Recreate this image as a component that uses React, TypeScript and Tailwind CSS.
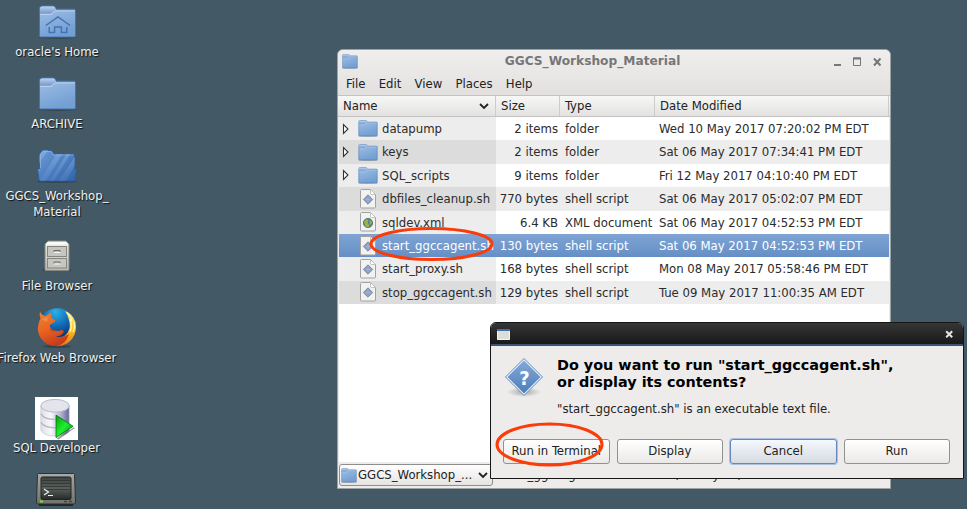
import React from "react";

const font = "font-['DejaVu_Sans_Condensed','DejaVu_Sans',sans-serif] [font-stretch:condensed]";

function FolderArt({ w, h, home }: { w: number; h: number; home?: boolean }) {
  return (
    <svg width={w} height={h} viewBox="0 0 40 34" preserveAspectRatio="none" className="shrink-0">
      <defs>
        <linearGradient id="fold" x1="0" y1="0" x2="0.4" y2="1">
          <stop offset="0" stopColor="#a2c0e6" />
          <stop offset="1" stopColor="#739fd3" />
        </linearGradient>
        <linearGradient id="tab" x1="0" y1="0" x2="0" y2="1">
          <stop offset="0" stopColor="#b9d0ee" />
          <stop offset="1" stopColor="#7399cb" />
        </linearGradient>
      </defs>
      <ellipse cx="20" cy="32.5" rx="19.5" ry="1.5" fill="#000" opacity=".22" />
      <path d="M1.500 7V3.500Q1.500 1 4.500 1h11q2 0 2.500 2l.8 1.200H37q1.500 0 1.500 1.500V31q0 1-1 1H2.500q-1 0-1-1z" fill="url(#fold)" stroke="#4173b3" strokeWidth="1" />
      <path d="M2 7V3.500Q2 1.500 4.500 1.500h11q1.700 0 2.200 1.700L18 5l-3 2-2 1.500H2z" fill="url(#tab)" />
      <path d="M2.500 9.500h11l4-3.500H37.500" fill="none" stroke="#b8cfec" strokeWidth="1" />
      {home && <path d="M8 20.500L20.500 12l12.500 8.500M11.500 22v5.500h5.500V22h7v5.500h5.500V22" fill="none" stroke="#4173b3" strokeWidth="1.500" />}
    </svg>
  );
}

function OpenFolderArt() {
  return (
    <svg width="42" height="34" viewBox="0 0 42 34">
      <defs>
        <linearGradient id="open" x1="0" y1="0" x2="1" y2="1">
          <stop offset="0" stopColor="#6c9bd8" />
          <stop offset="1" stopColor="#2f62a8" />
        </linearGradient>
        <linearGradient id="stripe" x1="0" y1="0" x2="0" y2="1">
          <stop offset="0" stopColor="#a9caf2" stopOpacity=".4" />
          <stop offset="1" stopColor="#8ab2e6" stopOpacity=".12" />
        </linearGradient>
        <clipPath id="openclip"><path d="M3 20V4l3-3h10l3 4h20v15h1.500L39.500 32H3L1.500 20z" /></clipPath>
      </defs>
      <ellipse cx="21" cy="32.5" rx="20" ry="1.300" fill="#000" opacity=".25" />
      <path d="M3.500 20V5L6.500 1.500h8q1.500 0 2.500 2L18 5h19q1.500 0 1.500 1.500V20h2L39 31q0 1-1 1H4.500q-1 0-1.500-1L1.500 20z" fill="url(#open)" stroke="#2d5da1" strokeWidth=".9" />
      <g clipPath="url(#openclip)" fill="url(#stripe)">
        <path d="M8 0h5L0 19v-8zM21 4h6L9 33H3zM31 4h4L17 33h-4zM40 6v9L29 33h-7z" />
      </g>
      <path d="M4.500 19V5.500L7 2.500h7.500q1 0 1.500 1.500l1 2H37.500M2.800 21h1.700" fill="none" stroke="#8fb5e6" strokeWidth=".9" opacity=".8" />
    </svg>
  );
}

function CabinetArt() {
  return (
    <svg width="28" height="34" viewBox="0 0 28 34">
      <defs>
        <linearGradient id="cab" x1="0" y1="0" x2="0" y2="1">
          <stop offset="0" stopColor="#f1f1ed" />
          <stop offset="1" stopColor="#b9bab3" />
        </linearGradient>
      </defs>
      <rect x="0" y="29" width="28" height="2" fill="#000" opacity=".25" />
      <path d="M2 4l3-3h18l3 3v26.500H2z" fill="url(#cab)" stroke="#84857f" />
      <path d="M3 4.500L5.500 2h17L25 4.500z" fill="#fafaf8" />
      <g fill="#c5c6bf" stroke="#84857f">
        <rect x="4.500" y="6.500" width="19" height="10" />
        <rect x="4.500" y="18.500" width="19" height="9.500" />
      </g>
      <path d="M11 12v-1.500h6V12M11 23.500V22h6v1.500" fill="none" stroke="#6a6a66" strokeWidth="1" />
      <path d="M11 12.500h6.500M11 24h6.500" stroke="#f5f5f5" />
    </svg>
  );
}

function FirefoxArt() {
  return (
    <svg width="42" height="42" viewBox="0 0 42 42">
      <defs>
        <radialGradient id="globe" cx=".45" cy=".1" r=".8">
          <stop offset="0" stopColor="#27b2e8" />
          <stop offset=".5" stopColor="#1368b5" />
          <stop offset="1" stopColor="#0c2463" />
        </radialGradient>
        <linearGradient id="fur" x1=".1" y1="0" x2=".5" y2="1">
          <stop offset="0" stopColor="#f08138" />
          <stop offset=".5" stopColor="#ea6420" />
          <stop offset="1" stopColor="#c43a1c" />
        </linearGradient>
        <linearGradient id="flame" x1="0" y1="0" x2="0" y2="1">
          <stop offset="0" stopColor="#ffe97a" />
          <stop offset=".5" stopColor="#fcc822" />
          <stop offset="1" stopColor="#e8701d" />
        </linearGradient>
      </defs>
      <ellipse cx="21" cy="39.500" rx="14" ry="1.500" fill="#000" opacity=".25" />
      <circle cx="21.500" cy="19.500" r="18.300" fill="url(#globe)" />
      <path d="M29 4q8 3 10.500 11Q41.500 25 36 32q-6 7.500-15 7.300L18 32q10 0 14-7 3-5 1-12-1-5-4-9z" fill="url(#flame)" />
      <path d="M31 6q4 3 5 8M34 12q2.500 7 0 13M38 15q1 6-1 10" stroke="#fff6c0" strokeWidth="1.300" fill="none" />
      <path d="M4 4.500Q5 7.500 9 9q3-1 6-3.500Q14.500 8.500 15.500 11q2 1.500 4 2.200-.5 2.300-5 4-1 1.800-.5 2.800 1.500 3 4.500 3.500 3.500 1 7.500-.5Q28.500 24 27 26q-2 3-7 3.500 6 2 13-2.500-3 10-12 12.300Q11 39.500 5.500 32 .5 25 2.300 18 3 14 4.500 11.500 3 8 4 4.500z" fill="url(#fur)" />
      <path d="M5.500 12.500q3-2.500 7-2-2 2-1 4.500" fill="#f9a552" opacity=".55" />
      <path d="M14 20.500q2 3 5.500 3.200-3 1.300-5-.2z" fill="#a83312" opacity=".6" />
    </svg>
  );
}

function DatabaseArt() {
  return (
    <svg width="43" height="43" viewBox="0 0 44 44" className="bg-white">
      <defs>
        <linearGradient id="db" x1="0" y1="0" x2="1" y2="0">
          <stop offset="0" stopColor="#dedee6" />
          <stop offset=".35" stopColor="#f8f8fb" />
          <stop offset=".7" stopColor="#b4b4d0" />
          <stop offset="1" stopColor="#63639c" />
        </linearGradient>
        <linearGradient id="play" x1="0" y1="0" x2="1" y2="1">
          <stop offset="0" stopColor="#0a9a10" />
          <stop offset=".5" stopColor="#1cf22c" />
          <stop offset="1" stopColor="#067a0a" />
        </linearGradient>
      </defs>
      <path d="M6 9v25q3 6 15 6t14-6V9z" fill="url(#db)" stroke="#c9c9d4" strokeWidth=".8" />
      <path d="M6 17q3 6 15 6M6 26q3 5.500 15 5.500" fill="none" stroke="#b5b5c4" strokeWidth="1.300" />
      <ellipse cx="20.500" cy="9" rx="14.500" ry="6.500" fill="#e4e4ed" stroke="#b8b8c6" />
      <path d="M22 42.500l18-11.500.5 1L24 43.500z" fill="#555" opacity=".6" />
      <path d="M21.500 18.500L39 30 21.500 41.500z" fill="url(#play)" stroke="#0a6b12" strokeWidth=".8" />
    </svg>
  );
}

function TerminalArt() {
  return (
    <svg width="40" height="36" viewBox="0 0 40 36">
      <defs>
        <linearGradient id="scr" x1="0" y1="0" x2="0" y2="1">
          <stop offset="0" stopColor="#3c4340" />
          <stop offset=".5" stopColor="#59605c" />
          <stop offset="1" stopColor="#262b29" />
        </linearGradient>
        <linearGradient id="case" x1="0" y1="0" x2="0" y2="1">
          <stop offset="0" stopColor="#aaa" />
          <stop offset="1" stopColor="#70706e" />
        </linearGradient>
      </defs>
      <rect x="3" y="31" width="34" height="3" fill="#222" />
      <path d="M2.500 1.500h35q1 0 1 1L39.500 30q0 2-1.500 2H2Q.5 32 .5 30L1.500 2.500q0-1 1-1z" fill="url(#case)" stroke="#30302f" />
      <rect x="5" y="5" width="30" height="22.500" rx="1.500" fill="url(#scr)" stroke="#202421" />
      <path d="M6 8.500h28M6 11.500h28M6 14.500h28M6 17.500h28" stroke="#2c312f" strokeWidth=".7" />
      <path d="M8 17l4.500 3L8 23M12 23.500h5" fill="none" stroke="#eee" strokeWidth="1.200" />
      <rect x="4" y="28.500" width="3" height="2" fill="#73e42c" />
      <path d="M28 29.500h3M33 29.500h3" stroke="#444" strokeWidth="1.500" />
    </svg>
  );
}

function FileArt({ globe }: { globe?: boolean }) {
  return (
    <svg width="18" height="20" viewBox="0 0 18 20" className="ml-px shrink-0">
      <path d="M1.500 1.500Q1.500.5 2.500.5H11.500L16.500 5.500V18q0 1-1 1h-13q-1 0-1-1z" fill="#f2f2f1" stroke="#a2a3a0" />
      <path d="M11.500.5v4q0 1 1 1h4z" fill="#fff" stroke="#b5b5b3" strokeWidth=".8" />
      {globe ? (
        <g>
          <circle cx="9" cy="11" r="4.600" fill="#4f7fb5" stroke="#47664a" strokeWidth=".8" />
          <path d="M5 10l2.500-3 2 1-1 3 2 2-1 2.500-3-1zM11 8l2 2-1 3-1.500-2z" fill="#9cb542" />
        </g>
      ) : (
        <g>
          <path d="M9 5.800L13.700 10.500 9 15.200 4.300 10.500z" fill="#8e9fc5" stroke="#7a85a3" strokeWidth=".9" />
          <path d="M6.500 10.500h5M9 8v5" stroke="#bdc8df" strokeWidth=".8" opacity=".6" />
        </g>
      )}
    </svg>
  );
}

function Launcher({ x, y, art, lines, step = 0 }: { x: number; y: number; art: React.ReactNode; lines: string[]; step?: number }) {
  return (
    <div className="absolute flex w-[140px] -translate-x-1/2 flex-col items-center" style={{ left: x, top: y }}>
      {art}
      <div className="whitespace-pre text-center text-[13px] leading-[15.5px] text-[#f0f0f0] [text-shadow:1px_1px_1px_#111]" style={{ marginTop: step }}>
        {lines.map((l) => <div key={l}>{l}</div>)}
      </div>
    </div>
  );
}

const rows = [
  ["datapump", "2 items", "folder", "Wed 10 May 2017 07:20:02 PM EDT"],
  ["keys", "2 items", "folder", "Sat 06 May 2017 07:34:41 PM EDT"],
  ["SQL_scripts", "9 items", "folder", "Fri 12 May 2017 04:10:40 PM EDT"],
  ["dbfiles_cleanup.sh", "770 bytes", "shell script", "Sat 06 May 2017 05:02:07 PM EDT"],
  ["sqldev.xml", "6.4 KB", "XML document", "Sat 06 May 2017 04:52:53 PM EDT"],
  ["start_ggccagent.sh", "130 bytes", "shell script", "Sat 06 May 2017 04:52:53 PM EDT"],
  ["start_proxy.sh", "168 bytes", "shell script", "Mon 08 May 2017 05:58:46 PM EDT"],
  ["stop_ggccagent.sh", "129 bytes", "shell script", "Tue 09 May 2017 11:00:35 AM EDT"],
];

const columns = "grid grid-cols-[157px_64px_95px_1fr]";

function Chevron() {
  return <svg width="10" height="7" viewBox="0 0 10 7" className="shrink-0"><path d="M1 1l4 4 4-4" fill="none" stroke="#222" strokeWidth="1.800" /></svg>;
}

function FileRow({ row, i }: { row: string[]; i: number }) {
  const folder = row[2] === "folder";
  const selected = i === 5;
  const odd = i % 2 === 1;
  const tone = selected ? "bg-linear-to-b from-[#7fa4d4] to-[#658fc5] text-white" : odd ? "bg-[#ededed] text-[#2b2b2b]" : "bg-white text-[#2b2b2b]";
  const nameTone = selected ? "" : odd ? "bg-[#dcdcdc]" : "bg-[#ededed]";
  return (
    <div className={`${columns} h-[23.4px] items-center whitespace-nowrap ${tone}`}>
      <div className={`flex h-full items-center pl-[3px] ${nameTone}`}>
        <div className="w-4 shrink-0">
          {folder && <svg width="8" height="12" viewBox="0 0 8 12" className="block"><path d="M1.500 1.500v9L6 6z" fill="#fff" stroke="#333" strokeWidth="1.100" /></svg>}
        </div>
        <div className="flex w-6 shrink-0">
          {folder ? <FolderArt w={20} h={17} /> : <FileArt globe={row[0] === "sqldev.xml"} />}
        </div>
        <span>{row[0]}</span>
      </div>
      <span className="pr-[2px] text-right">{row[1]}</span>
      <span className="pl-[5px]">{row[2]}</span>
      <span className="pl-1">{row[3]}</span>
    </div>
  );
}

function FileWindow() {
  return (
    <section className="absolute left-[337px] top-[49px] flex h-[440px] w-[554px] flex-col overflow-hidden rounded-t-[6px] border border-[#9da2a4] bg-[#edeceb] text-[13px] text-[#222]">
      <header className="flex h-[23px] shrink-0 items-center bg-linear-to-b from-[#efeeed] to-[#e9e8e7] pl-1 pr-[7px]">
        <FolderArt w={16} h={15} />
        <h1 className="flex-1 pb-[2px] text-center font-['DejaVu_Sans',sans-serif] text-[12.2px] font-bold leading-[20px] text-[#777] [font-stretch:normal]"><span className="relative -left-[3px]">GGCS_Workshop_Material</span></h1>
        <svg width="50" height="12" viewBox="0 0 50 12" fill="none" stroke="#777">
          <path d="M1 9h7" strokeWidth="2" />
          <path d="M20.500 2v7.500h7V2z" /><path d="M20 2.500h8" strokeWidth="2" />
          <path d="M41 2.500l6.500 7M47.500 2.500L41 9.500" strokeWidth="2" />
        </svg>
      </header>
      <nav className="flex h-[22px] shrink-0 items-center gap-[13.2px] bg-linear-to-b from-[#e9e8e7] to-[#e1e0df] pl-2">
        {["File", "Edit", "View", "Places", "Help"].map((m) => <span key={m}>{m}</span>)}
      </nav>
      <div className={`${columns} h-[22px] shrink-0 items-center border-y border-[#c4c3c1] bg-linear-to-b from-[#f7f7f6] to-[#e3e2e0] pl-px`}>
        <div className="flex items-center justify-between border-r border-[#ccc] pl-1 pr-[6px]"><span>Name</span><Chevron /></div>
        <span className="border-r border-[#ccc] pl-[5px]">Size</span>
        <span className="border-r border-[#ccc] pl-[5px]">Type</span>
        <span className="mr-px border-r border-[#ccc] pl-[5px]">Date Modified</span>
      </div>
      <div className="mx-px flex-1 bg-white">
        {rows.map((r, i) => <FileRow key={r[0]} row={r} i={i} />)}
      </div>
      <footer className="flex h-[26px] shrink-0 items-center whitespace-nowrap pl-px">
        <div className="flex h-[22px] w-[154px] shrink-0 items-center rounded-[3px] border border-[#8f8e8c] bg-linear-to-b from-white to-[#e5e4e2] pl-px pr-1">
          <FolderArt w={16} h={15} />
          <span className="flex-1 pl-px">GGCS_Workshop_...</span>
          <Chevron />
        </div>
        <span className="pl-[2px]">"start_ggccagent.sh" selected (130 bytes)</span>
        <svg width="12" height="12" className="ml-auto" stroke="#aaa" strokeDasharray="1 2"><path d="M8 3h3M5 6h6M2 9h9" /></svg>
      </footer>
    </section>
  );
}

function Dialog() {
  const plain = "border-[#92918f] from-white to-[#eae9e7]";
  const focus = "border-[#6288bd] from-[#f5f8fc] to-[#d6dbe3] shadow-[0_0_0_1px_#a9c0de]";
  return (
    <section className="absolute left-[490px] top-[322px] flex h-[157px] w-[474px] flex-col overflow-hidden rounded-t-[6px] border border-[#161616] bg-[#edeceb] text-[13px] text-[#222]">
      <header className="flex h-[23px] shrink-0 items-center justify-between border-b-2 border-[#3b5472] bg-linear-to-b from-[#363636] to-[#191919] pl-[6px] pr-[9px]">
        <svg width="13" height="11" viewBox="0 0 13 11" className="mt-[2px]"><path d="M.5.5h12v10H.5z" fill="#deded8" stroke="#f5f5f5" /><path d="M0 1h13" stroke="#3f70b5" strokeWidth="2" /></svg>
        <svg width="9" height="9" viewBox="0 0 9 9" className="mt-[2px]"><path d="M1.200 1.200l6 6M7.200 1.200l-6 6" stroke="#e4e4e4" strokeWidth="2" /></svg>
      </header>
      <div className="flex h-[93px] shrink-0 pl-[13px]">
        <svg width="40" height="42" viewBox="0 0 40 42" className="mt-[11px]">
          <defs>
            <radialGradient id="shade"><stop offset="0" stopColor="#000" stopOpacity=".3" /><stop offset="1" stopColor="#000" stopOpacity="0" /></radialGradient>
            <linearGradient id="ask" x1="0" y1="0" x2="0" y2="1"><stop offset="0" stopColor="#82a8d8" /><stop offset="1" stopColor="#4f7eba" /></linearGradient>
          </defs>
          <ellipse cx="20" cy="35" rx="17" ry="5" fill="url(#shade)" />
          <path d="M20 1.500L38.500 20 20 38.500 1.500 20z" fill="#eef3fa" stroke="#5f89be" strokeWidth="1" strokeLinejoin="round" />
          <path d="M20 3.500L36.500 20 20 36.500 3.500 20z" fill="url(#ask)" />
          <text x="20.500" y="27.500" textAnchor="middle" fill="#fff" className="font-['DejaVu_Sans',sans-serif] text-[20px] font-bold">?</text>
        </svg>
        <div className="pl-[13px] pt-[11px]">
          <h2 className="whitespace-nowrap font-['DejaVu_Sans',sans-serif] text-[14.4px] font-bold leading-[17px] text-black [font-stretch:normal]">Do you want to run "start_ggccagent.sh",<br />or display its contents?</h2>
          <p className="mt-[9px] whitespace-nowrap text-[13px] leading-[17px]">"start_ggccagent.sh" is an executable text file.</p>
        </div>
      </div>
      <div className="grid grid-cols-4 gap-[7px] pl-3 pr-[13px]">
        {["Run in Terminal", "Display", "Cancel", "Run"].map((b) => (
          <button key={b} className={`h-[25px] whitespace-nowrap rounded-[3px] border bg-linear-to-b pb-px ${b === "Cancel" ? focus : plain}`}>{b}</button>
        ))}
      </div>
    </section>
  );
}

export default function App() {
  return (
    <main className={`relative h-[509px] w-[967px] overflow-hidden bg-[#435a66] ${font}`}>
      <Launcher x={57} y={5} art={<FolderArt w={39} h={34} home />} lines={["oracle's Home"]} step={5} />
      <Launcher x={57} y={77} art={<FolderArt w={39} h={34} />} lines={["ARCHIVE"]} step={5} />
      <Launcher x={57} y={149} art={<OpenFolderArt />} lines={["GGCS_Workshop_", "Material"]} step={5} />
      <Launcher x={57} y={240} art={<CabinetArt />} lines={["File Browser"]} step={4} />
      <Launcher x={57} y={307} art={<FirefoxArt />} lines={["Firefox Web Browser"]} step={1} />
      <Launcher x={56.5} y={397} art={<DatabaseArt />} lines={["SQL Developer"]} step={0} />
      <Launcher x={56} y={472} art={<TerminalArt />} lines={[]} />
      <FileWindow />
      <Dialog />
      <svg className="pointer-events-none absolute inset-0" width="967" height="509" fill="none" stroke="#fb3c0a" strokeWidth="3">
        <ellipse cx="431.500" cy="244" rx="60.500" ry="15.500" />
        <ellipse cx="549.500" cy="444.500" rx="52.500" ry="20.500" />
      </svg>
    </main>
  );
}
